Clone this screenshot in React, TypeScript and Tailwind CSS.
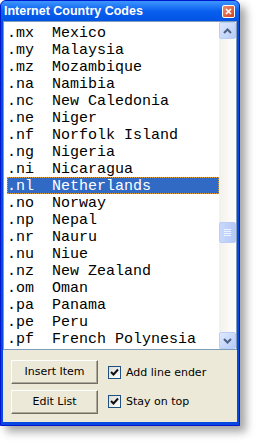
import React from 'react';

const rows: [string, string][] = [
  ['.mx', 'Mexico'],
  ['.my', 'Malaysia'],
  ['.mz', 'Mozambique'],
  ['.na', 'Namibia'],
  ['.nc', 'New Caledonia'],
  ['.ne', 'Niger'],
  ['.nf', 'Norfolk Island'],
  ['.ng', 'Nigeria'],
  ['.ni', 'Nicaragua'],
  ['.nl', 'Netherlands'],
  ['.no', 'Norway'],
  ['.np', 'Nepal'],
  ['.nr', 'Nauru'],
  ['.nu', 'Niue'],
  ['.nz', 'New Zealand'],
  ['.om', 'Oman'],
  ['.pa', 'Panama'],
  ['.pe', 'Peru'],
  ['.pf', 'French Polynesia'],
];

function ScrollButton({ dir }: { dir: 'up' | 'down' }) {
  return (
    <div className="w-[17px] h-[17px] flex items-center justify-center rounded-[2px] border border-[#b9cdf7] bg-gradient-to-br from-[#dfe8fd] to-[#b7cbf8]">
      <svg width="9" height="6" viewBox="0 0 9 6">
        <path
          d={dir === 'up' ? 'M1 5 L4.5 1.5 L8 5' : 'M1 1 L4.5 4.5 L8 1'}
          fill="none"
          stroke="#4d6185"
          strokeWidth="2"
        />
      </svg>
    </div>
  );
}

function Check({ label }: { label: string }) {
  return (
    <div className="h-[15px] flex items-center gap-[5px]">
      <div className="w-[13px] h-[13px] border border-[#1c5180] bg-gradient-to-br from-[#dcdbd5] to-white flex items-center justify-center">
        <svg width="9" height="9" viewBox="0 0 9 9">
          <path d="M1 4 L3.5 6.5 L8 1.5" fill="none" stroke="#111" strokeWidth="2" />
        </svg>
      </div>
      <span className="text-[11px] leading-none text-black">{label}</span>
    </div>
  );
}

function Btn({ label }: { label: string }) {
  return (
    <div className="w-[87px] h-[24px] flex items-center justify-center bg-[#ece9d8] border border-t-white border-l-white border-b-[#716f64] border-r-[#716f64] shadow-[inset_-1px_-1px_0_#aca899] text-[11px] text-black">
      {label}
    </div>
  );
}

export default function App() {
  return (
    <div className="w-[256px] h-[442px] bg-white" style={{ fontFamily: 'Tahoma, "DejaVu Sans", sans-serif' }}>
      <div className="w-[240px] h-[426px] flex flex-col bg-[#0848e0] rounded-t-[6px] shadow-[6px_6px_8px_rgba(0,0,0,0.35)] border border-[#0019cf]">
        {/* title */}
        <div className="h-[20px] flex items-center justify-between pl-[3px] pr-[4px] bg-gradient-to-b from-[#3d95ff] via-[#0a5fee] to-[#0054e3] rounded-t-[5px]">
          <span className="text-white font-bold text-[12.5px]" style={{ fontFamily: '"Liberation Sans", Arial, sans-serif' }}>
            Internet Country Codes
          </span>
          <div className="w-[13px] h-[13px] mt-[1px] rounded-[2px] border border-white bg-gradient-to-br from-[#ec8e70] to-[#d2401a] flex items-center justify-center">
            <svg width="7" height="7" viewBox="0 0 7 7">
              <path d="M1 1 L6 6 M6 1 L1 6" stroke="white" strokeWidth="1.7" />
            </svg>
          </div>
        </div>
        {/* client */}
        <div className="flex-1 mx-[2px] mb-[3px] bg-[#ece9d8] flex flex-col">
          <div className="h-[329px] border border-[#7f9db9] bg-white flex">
            <div className="flex-1 pt-[2px] pl-[3px]" style={{ fontFamily: '"Liberation Mono", "Courier New", monospace' }}>
              {rows.map(([code, name]) => {
                const sel = code === '.nl';
                return (
                  <div
                    key={code}
                    className={`h-[17px] flex items-center pt-[2px] text-[15px] leading-none whitespace-pre ${
                      sel ? 'bg-[#316ac5] text-white outline outline-1 outline-dotted outline-[#e0a040] -outline-offset-1' : 'text-black'
                    }`}
                  >
                    {code.padEnd(5, ' ') + name}
                  </div>
                );
              })}
            </div>
            <div className="w-[17px] flex flex-col bg-gradient-to-r from-[#f3f1ec] to-[#fefefb]">
              <ScrollButton dir="up" />
              <div className="flex-1 relative">
                <div className="absolute left-0 top-[183px] w-[17px] h-[21px] rounded-[2px] border border-[#b9cdf7] bg-gradient-to-r from-[#c9d8fc] to-[#b5c9f7] flex flex-col items-center justify-center gap-[1px]">
                  <div className="w-[7px] h-[1px] bg-[#eef4fe]" />
                  <div className="w-[7px] h-[1px] bg-[#eef4fe]" />
                  <div className="w-[7px] h-[1px] bg-[#eef4fe]" />
                  <div className="w-[7px] h-[1px] bg-[#eef4fe]" />
                </div>
              </div>
              <ScrollButton dir="down" />
            </div>
          </div>
          <div className="flex pl-[8px] pt-[10px] gap-[10px]">
            <div className="flex flex-col gap-[6px]">
              <Btn label="Insert Item" />
              <Btn label="Edit List" />
            </div>
            <div className="flex flex-col gap-[14px] pt-[5px]">
              <Check label="Add line ender" />
              <Check label="Stay on top" />
            </div>
          </div>
        </div>
      </div>
    </div>
  );
}
